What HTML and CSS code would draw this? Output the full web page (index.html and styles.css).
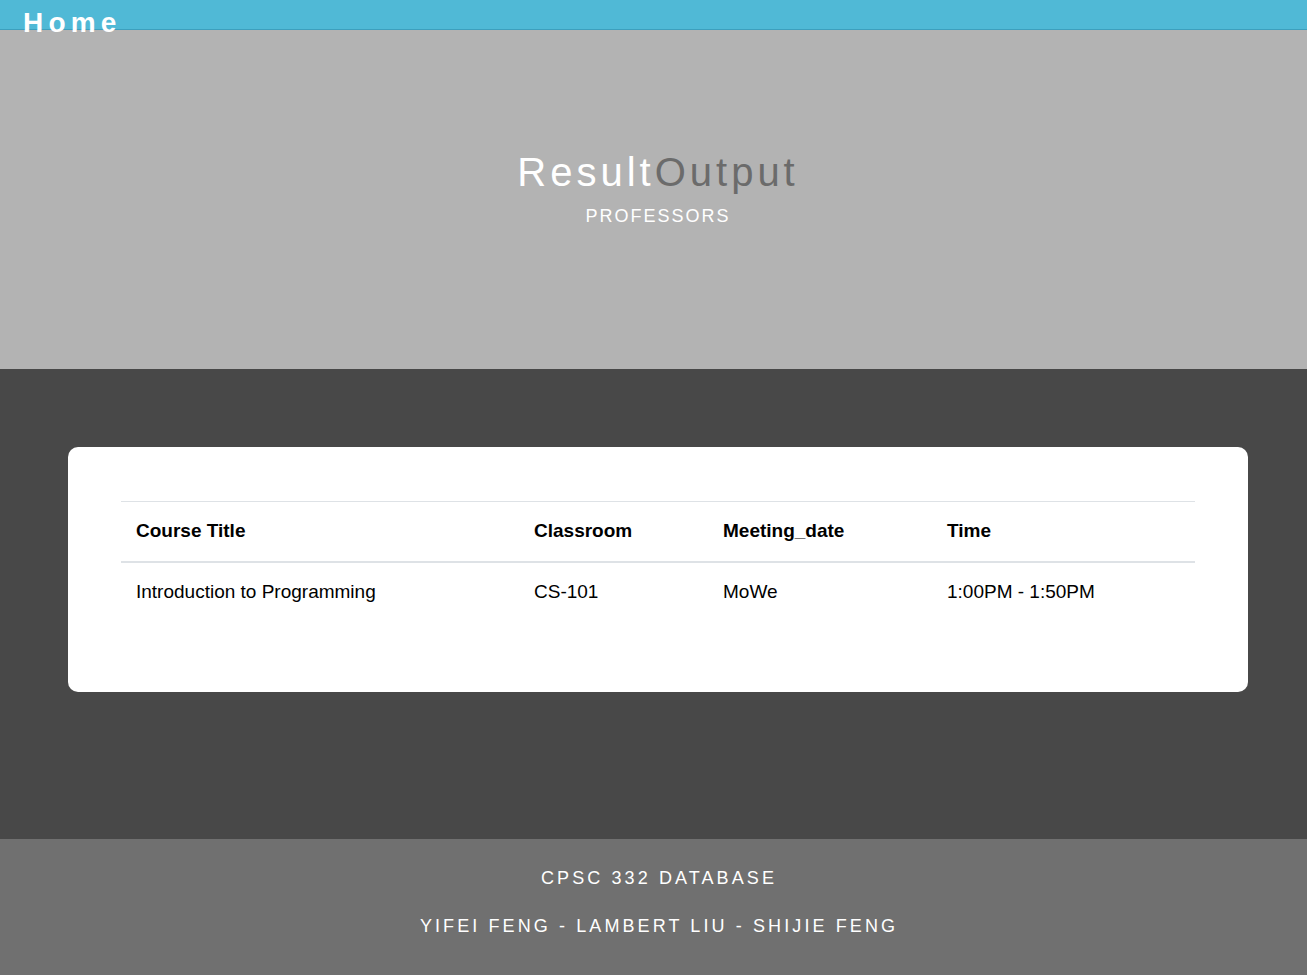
FILE: index.html
```html
<!DOCTYPE html>
<html>
<head>
<meta charset="utf-8">
<title>Result Output</title>
<link rel="stylesheet" href="styles.css">
</head>
<body>
<nav class="topbar"><a class="home" href="#">Home</a></nav>
<header class="hero">
  <h1 class="title"><span class="t-light">Result</span><span class="t-dark">Output</span></h1>
  <p class="subtitle">PROFESSORS</p>
</header>
<main class="content">
  <div class="card">
    <table class="results">
      <thead>
        <tr><th class="c1">Course Title</th><th class="c2">Classroom</th><th class="c3">Meeting_date</th><th class="c4">Time</th></tr>
      </thead>
      <tbody>
        <tr><td>Introduction to Programming</td><td>CS-101</td><td>MoWe</td><td>1:00PM - 1:50PM</td></tr>
      </tbody>
    </table>
  </div>
</main>
<footer class="footer">
  <p class="f-line">CPSC 332 DATABASE</p>
  <p class="f-line">YIFEI FENG - LAMBERT LIU - SHIJIE FENG</p>
</footer>
</body>
</html>
```
FILE: styles.css
```css
* { box-sizing: border-box; }
html, body { margin: 0; padding: 0; }
body { font-family: "Liberation Sans", Arial, sans-serif; background: #707070; }

.topbar {
  height: 30px;
  background: #50b9d6;
  border-bottom: 1px solid #3d9fbd;
  padding-left: 23px;
}
.home {
  display: inline-block;
  color: #fff;
  text-decoration: none;
  font-weight: bold;
  font-size: 28px;
  line-height: 29px;
  letter-spacing: 5.2px;
  padding-top: 8px;
}

.hero {
  height: 339px;
  background: #b3b3b3;
  display: flex;
  flex-direction: column;
  align-items: center;
  padding-top: 119px;
  padding-left: 9px;
}
.title {
  margin: 0;
  font-weight: normal;
  font-size: 40px;
  line-height: 46px;
  letter-spacing: 4px;
}
.t-light { color: #ffffff; }
.t-dark { color: #6b6b6b; }
.subtitle {
  margin: 10px 0 0;
  color: #fff;
  font-size: 18px;
  line-height: 22px;
  letter-spacing: 2px;
}

.content {
  background: #484848;
  height: 470px;
  padding: 78px 59px 0 68px;
}
.card {
  background: #fff;
  border-radius: 10px;
  height: 245px;
  padding: 54px 53px 0 53px;
}
.results {
  width: 100%;
  border-collapse: collapse;
  font-size: 19px;
  color: #000;
}
.results th, .results td {
  text-align: left;
  padding: 18px 15px 20px;
  line-height: 21px;
}
.results thead th {
  border-top: 1px solid #dee2e6;
  border-bottom: 2px solid #dee2e6;
  font-weight: bold;
}
.c1 { width: 398px; }
.c2 { width: 189px; }
.c3 { width: 224px; }

.footer {
  background: #707070;
  height: 136px;
  padding-top: 29px;
  padding-left: 11px;
  text-align: center;
  color: #fff;
}
.f-line {
  margin: 0 0 27px;
  font-size: 18px;
  line-height: 21px;
  letter-spacing: 3.1px;
}
```
